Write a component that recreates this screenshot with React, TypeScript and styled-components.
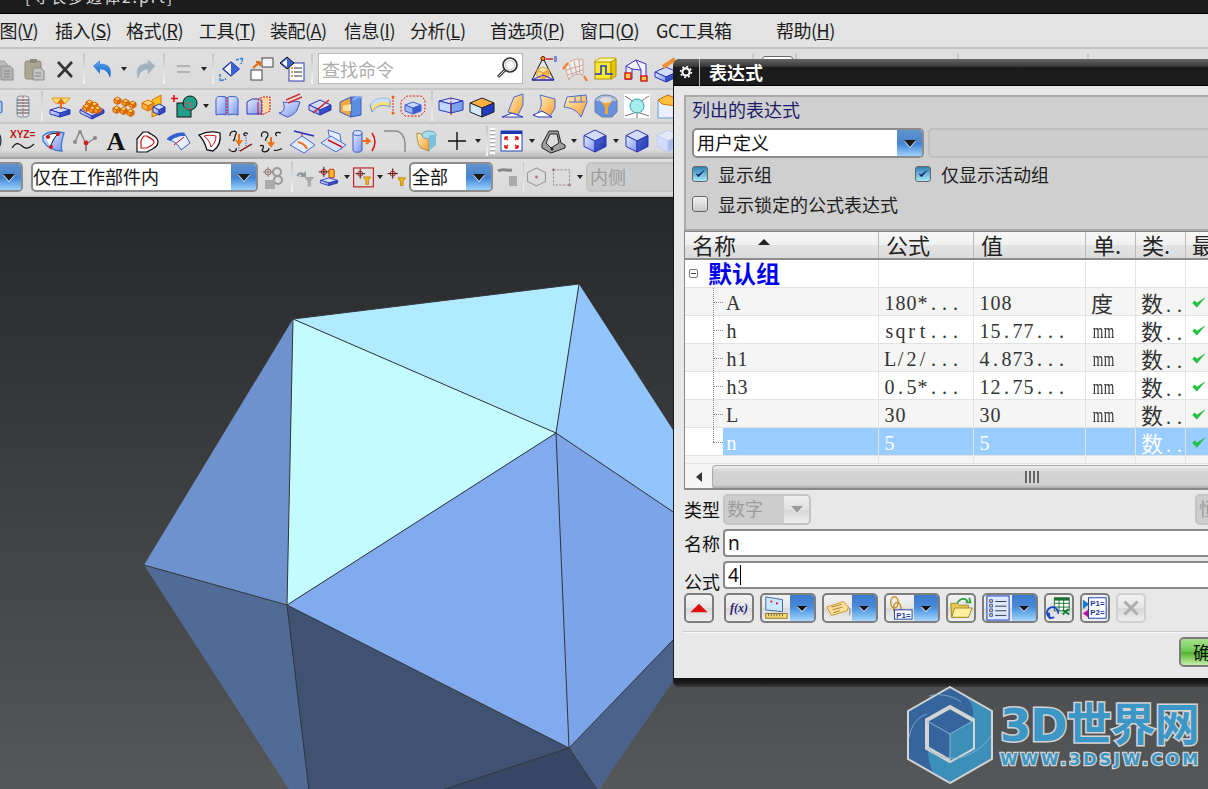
import React from "react";
import styled, { createGlobalStyle } from "styled-components";

const SANS = `"Noto Sans CJK SC", "Liberation Sans", sans-serif`;
const SERIF = `"Liberation Serif", "Noto Sans CJK SC", serif`;

const Global = createGlobalStyle`
  html, body { margin: 0; padding: 0; overflow: hidden; background: #333; }
  * { box-sizing: border-box; }
`;

const Page = styled.div`
  position: relative; width: 1208px; height: 789px; overflow: hidden;
  display: flex; flex-direction: column; font-family: ${SANS}; color: #222;
`;
const TitleStrip = styled.div`
  height: 14px; flex: none; background: #1c1c1c; border-bottom: 1px solid #000; overflow: hidden; padding-left: 25px;
`;
const TitleText = styled.div`
  margin-top: -15px; font: 16px/22px ${SANS}; color: #d8d8d8; word-spacing: 1px; letter-spacing: 1.9px;
`;
const MenuBar = styled.div`
  height: 35px; flex: none; display: flex; align-items: center; margin-left: -18px; padding-bottom: 2px;
  background: #e3e3e3; border-bottom: 2px solid #c0c0c0; white-space: nowrap;
`;
const MenuItem = styled.div<{ $w: number }>`
  flex: none; width: ${p => p.$w}px; font-size: 18px; line-height: 24px; color: #1c1c1c; letter-spacing: -.5px;
  u { text-underline-offset: 1px; }
`;
const ToolRow = styled.div<{ $h: number; $ml: number; $dark?: boolean }>`
  height: ${p => p.$h}px; flex: none; display: flex; align-items: center; padding-left: 0; overflow: hidden;
  & > :first-child { margin-left: ${p => p.$ml}px; }
  background: ${p => p.$dark ? "linear-gradient(#dedede 0, #dcdcdc 78%, #b8b8b8 100%)" : "linear-gradient(#e0e0e0, #dadada)"};
  border-bottom: 2px solid ${p => p.$dark ? "#a8a8a8" : "#c8c8c8"};
`;
const Slot = styled.div<{ $w?: number }>`
  flex: none; width: ${p => p.$w ?? 31}px; height: 30px; display: flex; align-items: center; justify-content: center;
`;
const MiniArrow = styled.div<{ $w?: number }>`
  flex: none; width: ${p => p.$w ?? 11}px; display: flex; justify-content: center;
  &::after { content: ""; border: 3px solid transparent; border-top: 4px solid #222; border-bottom: 0; }
`;
const Sep = styled.div<{ $w?: number }>`
  flex: none; width: ${p => p.$w ?? 7}px; height: 30px; display: flex; justify-content: center;
  &::after { content: ""; width: 2px; background: linear-gradient(#c4c4c4, #f4f4f4); }
`;
const Grip = styled.div`
  flex: none; width: 5px; height: 26px;
  background: repeating-linear-gradient(#fff 0 2px, #aaa 2px 3px, transparent 3px 4px);
`;
const Spacer = styled.div<{ $w: number }>`flex: none; width: ${p => p.$w}px;`;
const MiniPanel = styled.div`
  flex: none; width: 31px; height: 30px; margin-top: 4px; background: #fff; border: 1px solid #666; border-radius: 3px 3px 0 0;
`;
const SearchBox = styled.div`
  flex: none; width: 205px; height: 31px; margin-left: 1px; margin-right: 4px; background: #fff; border: 1px solid #bbb;
  display: flex; align-items: center; justify-content: space-between; padding: 0 0 0 3px;
  font-size: 18px; color: #aeaeae;
`;
const Combo = styled.div<{ $w: number; $h?: number; $off?: boolean }>`
  flex: none; width: ${p => p.$w}px; height: ${p => p.$h ?? 30}px; display: flex; align-items: stretch;
  background: ${p => p.$off ? "#cdcdcd" : "#fff"}; border: 2px solid ${p => p.$off ? "#c4c4c4" : "#8c8c8c"}; border-radius: 5px; overflow: hidden;
  font-size: 18px; color: ${p => p.$off ? "#9c9c9c" : "#111"};
`;
const ComboText = styled.div<{ $pad?: number }>`
  flex: 1; min-width: 0; padding-left: ${p => p.$pad ?? 2}px; line-height: 25px; white-space: nowrap; overflow: hidden;
`;
const ArrowBtn = styled.div<{ $w?: number; $off?: boolean }>`
  flex: none; width: ${p => p.$w ?? 25}px; display: flex; align-items: center; justify-content: center;
  background: ${p => p.$off ? "linear-gradient(#efefef, #e0e0e0 50%, #d6d6d6 52%, #eee)" : "linear-gradient(#5f93cf 0, #4a86cc 45%, #3f84d8 52%, #9ed2fb 100%)"};
  &::after { content: ""; border: 6px solid transparent; border-top: 7px solid ${p => p.$off ? "#999" : "#1a1a1a"}; border-bottom: 0; filter: drop-shadow(0 1px 0 #fff); }
`;

const Viewport = styled.div`
  flex: 1; background: linear-gradient(#262729, #565758); border-top: 1px solid #111;
`;
const Solid = styled.svg`display: block;`;
const Defs = styled.svg`position: absolute; width: 0; height: 0;`;

const Dialog = styled.div`
  position: absolute; left: 673px; top: 59px; width: 600px; height: 628px; display: flex; flex-direction: column;
  border-radius: 7px 0 0 7px; overflow: hidden; background: #1a1a1a;
`;
const DialogTitle = styled.div`
  height: 27px; flex: none; display: flex; align-items: center; gap: 0; color: #fff;
  background: linear-gradient(#666 0, #3a3a3a 28%, #1b1b1b 32%, #1b1b1b 100%); border-bottom: 1px solid #000;
`;
const GearBox = styled.div`
  width: 27px; height: 27px; display: flex; align-items: center; justify-content: center; border-right: 1px solid #bbb;
`;
const DialogName = styled.div`font-size: 18px; font-weight: 700; padding-left: 9px; line-height: 27px;`;
const DialogBody = styled.div`
  flex: none; height: 592px; background: #e8e8e8; padding: 9px 0 0 10px; margin-left: 1px; font-size: 18px; position: relative;
`;
const DialogFoot = styled.div`flex: 1; background: linear-gradient(#111, #1c1c1c 55%, #3a3a3a);`;
const GroupBox = styled.div`
  height: 136px; background: #cfcfcf; border: 2px solid #a9a9a9; border-right: 0; padding: 0 0 0 6px; color: #111;
`;
const GroupTitle = styled.div`font-size: 18px; line-height: 25px; color: #1c1c6a;`;
const ComboLine = styled.div`display: flex; gap: 4px; margin-top: 6px; height: 30px;`;
const BlankField = styled.div`flex: 1; border: 2px solid #bdbdbd; border-right: 0; border-radius: 5px 0 0 5px; background: #cdcdcd;`;
const CheckLine = styled.div`display: grid; grid-template-columns: 223px 1fr; height: 30px; align-items: center;`;
const CheckItem = styled.div`display: flex; align-items: center; gap: 10px; line-height: 24px; color: #1d1d1d; white-space: nowrap; margin-top: 1px;`;
const CheckBox = styled.div<{ $on?: boolean }>`
  width: 16px; height: 16px; border: 1px solid #666; border-radius: 3px; display: flex; align-items: center; justify-content: center;
  background: ${p => p.$on ? "linear-gradient(#2f7fb5, #a5ecf7)" : "linear-gradient(#f2f2f2, #c8c8c8)"};
`;

const Table = styled.div`
  height: 259px; border: 1px solid #888; border-width: 1px 0 2px 1px; background: #f5f5f5; overflow: hidden; display: flex; flex-direction: column; width: 530px;
`;
const Cols = `194px 95px 112px 50px 50px 100px`;
const HeadRow = styled.div`
  display: grid; grid-template-columns: ${Cols}; height: 28px; flex: none; border-bottom: 2px solid #8c8c8c;
  background: linear-gradient(#f7f7f7, #f0f0f0 48%, #e2e2e2 50%, #dcdcdc);
`;
const HeadCell = styled.div<{ $pad: number }>`
  border-right: 1px solid #bbb; padding: 0 0 3px ${p => p.$pad}px; font-size: 22px; line-height: 26px; color: #222; display: flex; align-items: center; white-space: nowrap; overflow: hidden;
`;
const SortMark = styled.div`margin-left: 22px; margin-top: -3px; border: 6px solid transparent; border-bottom: 6px solid #222; border-top: 0;`;
const DataRow = styled.div<{ $alt?: boolean; $h?: number }>`
  display: grid; grid-template-columns: ${Cols}; grid-auto-rows: minmax(0, 1fr); height: ${p => p.$h ?? 28}px; flex: none; border-bottom: 1px solid #e2e2e2;
  background: ${p => p.$alt ? "#f5f5f5" : "#fff"};
`;
const Cell = styled.div<{ $sel?: boolean; $pad?: number; $check?: boolean }>`
  position: relative; border-right: 1px solid #e2e2e2; padding: 2px 0 0 ${p => p.$pad ?? 5}px; font: 20px/27px ${SERIF}; white-space: nowrap; overflow: hidden;
  color: ${p => p.$sel ? "#fff" : "#333"}; background: ${p => p.$sel ? "#99ccff" : "transparent"};
  ${p => p.$check ? "display: flex; align-items: center;" : ""}
`;
const Cjk = styled.span`font: 22px/24px ${SANS}; vertical-align: 0;`;
const HalfChar = styled.span<{ $narrow?: boolean }>`
  display: inline-block; width: 11px; text-align: center;
  ${p => p.$narrow ? "transform: scaleX(.68);" : ""}
`;
const Half: React.FC<{ t: string }> = ({ t }) => (
  <>{t.split("").map((c, i) => <HalfChar key={i} $narrow={c === "m"}>{c}</HalfChar>)}</>
);
const NameCell = styled.div<{ $last?: boolean; $sel?: boolean }>`
  position: relative; display: flex; padding-left: 38px; border-right: 1px solid #e2e2e2; overflow: hidden;
  &::before { content: ""; position: absolute; left: 28px; top: 0; height: ${p => p.$last ? "50%" : "100%"}; border-left: 1px dotted #888; }
  &::after { content: ""; position: absolute; left: 28px; width: 10px; top: 50%; border-top: 1px dotted #888; }
`;
const NameText = styled.div<{ $sel?: boolean }>`
  flex: 1; padding: 2px 0 0 3px; font: 20px/27px ${SERIF}; color: ${p => p.$sel ? "#fff" : "#333"}; background: ${p => p.$sel ? "#99ccff" : "transparent"};
`;
const GroupCell = styled.div`
  display: flex; align-items: center; gap: 10px; padding: 0 0 1px 4px; border-right: 1px solid #e2e2e2; font-size: 24px; font-weight: 700; color: #0000f0; line-height: 22px;
`;
const MinusBox = styled.div`
  width: 9px; height: 9px; border: 1px solid #777; border-radius: 2px; display: flex; align-items: center; justify-content: center;
  &::after { content: ""; width: 5px; height: 1px; background: #444; }
`;
const ScrollBar = styled.div`flex: none; height: 24px; display: flex; align-items: center; margin-top: 1px;`;
const ScrollLeft = styled.div`
  width: 27px; display: flex; justify-content: center;
  &::after { content: ""; border: 5px solid transparent; border-right: 6px solid #333; border-left: 0; }
`;
const ScrollThumb = styled.div`
  flex: 1; height: 24px; border: 1px solid #aaa; border-right: 0; border-radius: 4px 0 0 4px; background: linear-gradient(#eee, #d4d4d4 25%, #d0d0d0 85%, #aaa);
  display: flex; align-items: center; padding-left: 312px;
`;
const ScrollGrip = styled.div`
  width: 14px; height: 12px; background: repeating-linear-gradient(90deg, #666 0 2px, #ddd 2px 4px);
`;
const FormRow = styled.div<{ $h: number; $end?: boolean }>`
  display: flex; height: ${p => p.$h}px; align-items: ${p => p.$end ? "flex-end" : "center"};
`;
const FormLabel = styled.div<{ $low?: number }>`
  flex: none; width: 39px; font-size: 18px; line-height: 24px; color: #111; white-space: nowrap; margin-bottom: ${p => -(p.$low ?? 0)}px;
`;
const TextField = styled.div`
  flex: 1; height: 28px; background: #fff; border: 2px solid #8a8a8a; border-right: 0; border-radius: 4px 0 0 4px; padding-left: 3px;
  font: 19px/24px "Noto Sans", ${SANS}; color: #111; display: flex; align-items: center;
`;
const Caret = styled.div`width: 1px; height: 20px; background: #000; margin-left: 1px;`;
const BtnRow = styled.div`display: flex; margin-top: 4px; height: 30px;`;
const ToolBtn = styled.div<{ $ml: number; $off?: boolean }>`
  flex: none; width: 30px; height: 30px; margin-left: ${p => p.$ml}px; display: flex; align-items: center; justify-content: center;
  border: 2px solid ${p => p.$off ? "#cfcfcf" : "#7e7e7e"}; border-radius: 5px; background: linear-gradient(#f2f2f2, #e6e6e6 48%, #d8d8d8 52%, #efefef);
`;
const SplitBtn = styled.div<{ $ml: number }>`
  flex: none; width: 56px; height: 30px; margin-left: ${p => p.$ml}px; display: flex; overflow: hidden;
  border: 2px solid #7e7e7e; border-radius: 5px; background: linear-gradient(#f2f2f2, #e6e6e6 48%, #d8d8d8 52%, #efefef);
`;
const SplitFace = styled.div`flex: 1; display: flex; align-items: center; justify-content: center;`;
const SplitArrow = styled.div`
  flex: none; width: 24px; display: flex; align-items: center; justify-content: center; background: linear-gradient(#3b78cc 0, #4a8ad8 45%, #4a94e0 52%, #a6d6fc);
  &::after { content: ""; border: 5px solid transparent; border-top: 5px solid #111; border-bottom: 0; filter: drop-shadow(0 1px 0 #fff); }
`;
const Rule = styled.div`margin: 8px 0 0 -1px; height: 2px; background: linear-gradient(#cbcbcb 50%, #f6f6f6 50%);`;
const OkRow = styled.div`display: flex; padding: 4px 0 0 495px;`;
const OkBtn = styled.div`
  width: 60px; height: 30px; border: 2px solid #7b7b7b; border-radius: 5px; padding-left: 12px; font-size: 18px; line-height: 26px; color: #111; background: linear-gradient(#a8e28c, #6fc850 48%, #53b330 52%, #c4f0a8); white-space: nowrap;
`;

const Mark = styled.div`position: absolute; left: 907px; top: 686px; width: 300px; height: 100px; display: flex; gap: 7px;`;
const MarkText = styled.div`display: flex; flex-direction: column; padding-top: 13px; color: #3c97c6;`;
const MarkBig = styled.div`
  font: 700 45px/53px "DejaVu Sans", "Noto Sans CJK SC", sans-serif; letter-spacing: -1px; white-space: nowrap;
  -webkit-text-stroke: 3px #d4d4d4; paint-order: stroke fill;
`;
const MarkSmall = styled.div`
  font: 700 16px/15px "DejaVu Sans", sans-serif; letter-spacing: 2.9px; white-space: nowrap; -webkit-text-stroke: 2.5px #d4d4d4; paint-order: stroke fill;
`;

const Ic: React.FC<{ children: React.ReactNode; s?: number }> = ({ children, s = 28 }) => (
  <svg width={s} height={s} viewBox="0 0 28 28">{children}</svg>
);

const Cube: React.FC<{ x: number; y: number; w: number; h: number; d: number; t?: string; l?: string; r?: string; k?: string }> = ({
  x, y, w, h, d, t = "#d3dcfb", l = "url(#gL)", r = "url(#gR)", k = "#2a36b4",
}) => (
  <g stroke={k} strokeWidth="1" strokeLinejoin="round">
    <path d={`M${x} ${y + d}L${x + w} ${y}L${x + 2 * w} ${y + d}L${x + w} ${y + 2 * d}Z`} fill={t} />
    <path d={`M${x} ${y + d}L${x + w} ${y + 2 * d}V${y + 2 * d + h}L${x} ${y + d + h}Z`} fill={l} />
    <path d={`M${x + 2 * w} ${y + d}L${x + w} ${y + 2 * d}V${y + 2 * d + h}L${x + 2 * w} ${y + d + h}Z`} fill={r} />
  </g>
);
const Orange: React.FC<{ x: number; y: number }> = ({ x, y }) => (
  <Cube x={x} y={y} w={3.5} h={3.5} d={2} t="#ffd060" l="#ffa020" r="#e87000" k="#d06000" />
);
const Cross: React.FC<{ x: number; y: number }> = ({ x, y }) => (
  <g stroke="#c00000" fill="none" strokeWidth="1"><circle cx={x} cy={y} r="3" /><path d={`M${x - 6} ${y}H${x + 6}M${x} ${y - 6}V${y + 6}`} stroke="#300" /></g>
);
const Funnel: React.FC<{ x: number; y: number }> = ({ x, y }) => (
  <path d={`M${x} ${y}h9l-3 4v5h-3v-5z`} fill="#f0b820" stroke="#c08000" />
);

const icons: Record<string, React.ReactNode> = {
  copy: <><path d="M3 6h10l3 3v13H3z" fill="#bcbcbc" stroke="#9a9a9a" /><path d="M10 11h9l3 3v11H10z" fill="#b4b4b4" stroke="#8e8e8e" /><path d="M13 16h6M13 19h6M13 22h6" stroke="#888" /></>,
  clip: <><rect x="4" y="6" width="16" height="18" rx="2" fill="#aaa692" stroke="#8f8b78" /><rect x="9" y="4" width="7" height="4" fill="#8f8b78" /><path d="M12 13h8l3 3v9H12z" fill="#c4c4c4" stroke="#8a8a8a" /><path d="M14 18h6M14 21h6" stroke="#888" /></>,
  del: <path d="M7 7L21 22M21 7L7 22" stroke="#333" strokeWidth="2.6" />,
  undo: <path d="M4 11L11 5V9C19 8 24 13 21 23C19 16 15 14 11 14.5V19Z" fill="url(#gUndo)" />,
  redo: <path d="M24 11L17 5V9C9 8 4 13 7 23C9 16 13 14 17 14.5V19Z" fill="#9fb0c0" stroke="#b4bdc8" />,
  eq: <path d="M8 11H21M8 17H21" stroke="#a4a4a4" strokeWidth="1.6" />,
  orient: <><path d="M14 7L22 14L14 21L6 14Z" fill="#fff" stroke="#1d2fa8" strokeWidth="1.3" /><path d="M14 7L22 14L14 21Z" fill="#3c62d8" /><path d="M19 5L26 3L24 9M3 19L3 26L9 24" fill="none" stroke="#2c7ad8" strokeWidth="1.4" strokeDasharray="3 1" /></>,
  squares: <><rect x="14" y="3" width="11" height="9" fill="#f4f4f4" stroke="#444" /><rect x="3" y="15" width="11" height="10" fill="#fff" stroke="#444" /><path d="M5 13L12 7M12 7H8M12 7V11" stroke="#e86a10" strokeWidth="2" fill="none" /></>,
  dlist: <><rect x="11" y="8" width="15" height="18" fill="#fff" stroke="#2a3ab0" /><path d="M16 13H24M16 17H24M16 21H24" stroke="#333" /><rect x="13" y="12" width="2" height="2" fill="#e0a030" /><rect x="13" y="16" width="2" height="2" fill="#e0a030" /><rect x="13" y="20" width="2" height="2" fill="#e0a030" /><path d="M9 2L16 8L9 14L2 8Z" fill="#3c62d8" stroke="#111" /><path d="M9 4L9 12L4 8Z" fill="#fff" /></>,
  lens: <><circle cx="16" cy="10" r="7" fill="#fff" stroke="#333" strokeWidth="1.7" /><circle cx="16" cy="10" r="4.5" fill="none" stroke="#bbb" /><path d="M11 15L4 22" stroke="#333" strokeWidth="3" /><path d="M10.6 15.5L4.5 21.5" stroke="#fff" strokeWidth="1" /></>,
  pyramid: <><path d="M14 3L3 25H25Z" fill="#fff" fillOpacity=".2" stroke="#111" /><Cube x={8} y={12} w={6} h={6} d={3} t="#ffe8b0" l="#ffd27a" r="#f4b040" k="#e8a030" /><path d="M3 25L14 20L25 25Z" fill="none" stroke="#2a2ad0" /><circle cx="14" cy="3.5" r="2" fill="#f2a000" stroke="#600" /><path d="M17 4H24" stroke="#d01010" strokeWidth="1.4" /><path d="M25 2H28M25 4H28M25 6H28" stroke="#2030d0" /></>,
  mesh: <><path d="M5 12C11 4 17 3 23 5V20C17 18 11 19 9 25Z" fill="#eee" stroke="#d8a090" /><path d="M9 9L13 22M14 6L17 20M19 5L20 19M6 15L23 10M7 20L23 15" stroke="#c8a8a0" fill="none" /><path d="M3 14L8 8M24 21L27 26" stroke="#f08030" strokeWidth="2.4" /></>,
  ybox: <><path d="M4 6L9 3H25L24 8H4Z" fill="#fff8a0" stroke="#c8a800" /><rect x="4" y="7" width="16" height="17" fill="#ffe830" stroke="#b09000" /><path d="M20 7L25 4V21L20 24Z" fill="#e8c800" stroke="#b09000" /><path d="M4 19H10V11H15V19H22" fill="none" stroke="#1838c8" strokeWidth="1.5" /></>,
  arch: <><path d="M4 11L14 5L24 9V24L19 25V15L10 14V24H4Z" fill="#f4f4ff" stroke="#3c2ad0" /><path d="M4 11L10 14M14 5L19 15" stroke="#3c2ad0" /><rect x="3" y="18" width="6" height="6" fill="#ffd040" stroke="#d01010" strokeWidth="1.4" /><rect x="19" y="21" width="6" height="5" fill="#ffd040" stroke="#d01010" strokeWidth="1.4" /></>,
  slab: <><Cube x={2} y={12} w={11} h={5} d={5} /><path d="M10 12L22 4" stroke="#f09030" strokeWidth="4" /></>,
  hex: <path d="M14 5L24 10V20L14 25L4 20V10Z" fill="#a8c4f0" stroke="#3060c0" />,
  spring: <><rect x="8" y="4" width="12" height="21" rx="3" fill="#dfe4e8" stroke="#8090a0" /><path d="M8 8H20M8 11H20M8 14H20M8 18H20M8 21H20" stroke="#555" /><path d="M14 4V25" stroke="#d05050" strokeDasharray="2 1" /></>,
  extrude: <><Cube x={3} y={15} w={10} h={4} d={3} /><path d="M5 6H23L19 11H8Z" fill="#ffe070" stroke="#e09020" /><path d="M14 17V10M11 12L14 8L17 12" fill="none" stroke="#e86a10" strokeWidth="2" /></>,
  pads: <><Cube x={2} y={12} w={12} h={3} d={6} /><Orange x={8} y={8} /><Orange x={13} y={10} /><Orange x={5} y={12} /><Orange x={11} y={14} /><Orange x={16} y={14} /></>,
  ocubes: <><Orange x={5} y={5} /><Orange x={13} y={7} /><Orange x={20} y={9} /><Orange x={4} y={14} /><Orange x={11} y={15} /><Orange x={18} y={17} /></>,
  planes: <><path d="M12 8L21 3V21L12 25Z" fill="#ffc020" stroke="#e07000" /><Cube x={2} y={8} w={6} h={5} d={3} t="#ffd080" l="#ffb040" r="#f09010" k="#e07000" /><Cube x={13} y={12} w={6} h={5} d={3} /></>,
  teal: <><rect x="6" y="11" width="14" height="14" fill="#23a08c" stroke="#111" /><circle cx="19" cy="11" r="7" fill="#23a08c" stroke="#111" /><rect x="14" y="11" width="6" height="6" fill="none" stroke="#c06060" /><path d="M3 3V10M0 6.5H7" stroke="#e01010" strokeWidth="1.6" /></>,
  book: <><path d="M3 23V8C3 4 7 4 13 5V23C9 22 6 22 3 23Z" fill="url(#gL)" stroke="#3a5ac8" /><path d="M25 23V8C25 4 21 4 15 5V23C19 22 22 22 25 23Z" fill="url(#gL)" stroke="#3a5ac8" /><path d="M14 5V23" stroke="#d01010" strokeDasharray="2 1" /></>,
  dotbox: <><path d="M3 10L8 7H18V22H3Z" fill="url(#gL)" stroke="#2a36c4" /><path d="M14 8L18 5H26V19L18 23V8Z" fill="#ffd8a0" stroke="#d01010" strokeDasharray="2 1" /><path d="M14 10V23" stroke="#d01010" /></>,
  surfcut: <><path d="M8 10C14 12 19 8 25 10L22 18C20 22 14 25 12 25L4 21C10 20 10 14 8 10Z" fill="url(#gL)" stroke="#3a5ac8" /><path d="M11 8L25 2M13 11L27 5" stroke="#d03030" strokeWidth="1.4" /></>,
  slabcut: <><Cube x={3} y={8} w={11} h={5} d={5} /><path d="M7 21L23 8" stroke="#d02020" strokeWidth="1.6" /></>,
  frame: <><path d="M3 10L14 5V25L3 20Z" fill="#f0a840" stroke="#3a5ac8" /><path d="M14 5L24 5V23L14 25Z" fill="#5c8ce0" stroke="#3a5ac8" /><path d="M6 14L14 12V19L6 19Z" fill="#ffe0a0" /><path d="M16 8C20 4 24 4 25 6" stroke="#8ab4f0" strokeWidth="2" fill="none" /></>,
  band: <><path d="M2 13C8 5 16 5 22 8V15C16 12 8 13 4 20Z" fill="#ffe070" stroke="#7098d0" /><path d="M2 13C8 5 16 5 22 8L20 11C14 9 9 10 4 15Z" fill="#c8e0ff" /><path d="M25 5V21" stroke="#e02020" strokeDasharray="2 1" /><circle cx="25" cy="5" r="1.5" fill="#f06000" /><circle cx="25" cy="21" r="1.5" fill="#f06000" /></>,
  redbox: <><Cube x={6} y={10} w={8} h={6} d={3} t="#c8d8ff" l="#9cb4f4" r="#3e5cd0" k="#4060d0" /><path d="M2 9L8 4H22L26 8V19L21 24H6L2 20Z" fill="none" stroke="#e01010" strokeDasharray="2 1.5" /></>,
  cutbox: <><Cube x={2} y={6} w={12} h={9} d={3} t="#d3e4fb" l="#c0d8ff" r="#7ba4ef" /><path d="M14 6V24" stroke="#d01010" strokeDasharray="2 1" /></>,
  ycube: <><Cube x={2} y={6} w={12} h={9} d={5} t="#ffb040" l="#d3e8ff" r="#1e3cc0" k="#222" /></>,
  sheet1: <><path d="M15 5L24 2V13L19 23L9 20Z" fill="url(#gO)" stroke="#4a6ad0" /><path d="M3 25L13 21L24 25Z" fill="#fff" stroke="#2a36b4" /></>,
  sheet2: <><path d="M10 3L25 7V16L20 24L8 20C12 16 12 10 10 3Z" fill="url(#gO)" stroke="#4a6ad0" /><path d="M3 23L12 19L22 25H8Z" fill="#fff" stroke="#2a36b4" /></>,
  sheet3: <><path d="M6 5L25 3L26 10L20 25C16 18 10 16 3 15Z" fill="url(#gO)" stroke="#4a6ad0" /><path d="M8 10H24M14 5V10M20 4V10" stroke="#4a6ad0" /></>,
  cup: <><ellipse cx="14" cy="9" rx="11" ry="6" fill="#aac0de" stroke="#6a80a0" /><path d="M3 9V20L10 25H20L25 20V9" fill="#6a90e0" stroke="#6a80a0" /><path d="M8 8H21L16 15V22H13V15Z" fill="#f8a828" /><ellipse cx="14" cy="8" rx="6" ry="3" fill="#ddd" /></>,
  corner: <><rect x="1" y="2" width="26" height="24" fill="#fff" /><path d="M2 4L14 12L26 4M14 20V26M2 24L14 20L26 24" stroke="#777" fill="none" /><circle cx="14" cy="14" r="7" fill="#a8ecec" stroke="#30a0b0" /></>,
  ysheet: <><path d="M4 8L14 3L26 8V26H4Z" fill="#e8f0ff" stroke="#7098d0" /><path d="M4 8L14 3L26 9L22 14L8 12Z" fill="#ffc040" stroke="#e07000" /></>,
  ball: <path d="M6 8C10 2 18 3 20 5C24 9 24 18 20 22C16 25 10 22 6 16Z" fill="#5070c0" stroke="#223" />,
  xyz: <><text x="1" y="11" fontFamily="Liberation Sans" fontWeight="700" fontSize="10" fill="#b81818">XYZ=</text><path d="M3 21C7 15 10 16 13 19C17 23 21 21 25 17" fill="none" stroke="#111" strokeWidth="1.1" /></>,
  patch: <><path d="M3 9C8 4 16 4 24 6C22 12 20 18 22 24C14 24 8 22 3 14Z" fill="url(#gL)" stroke="#3a7ac8" strokeWidth="1.4" /><path d="M6 10C10 6 15 6 18 7C14 10 12 16 10 20" fill="#fff" stroke="#111" /><circle cx="8" cy="10" r="2" fill="#e01010" /><circle cx="18" cy="7" r="2" fill="#e01010" /><circle cx="11" cy="20" r="2" fill="#e01010" /></>,
  nodes: <><path d="M9 4L4 15M9 4L15 17L24 11" stroke="#888" strokeWidth="1.5" fill="none" /><circle cx="9" cy="5" r="2" fill="#888" /><circle cx="4" cy="15" r="2" fill="#888" /><circle cx="24" cy="11" r="2" fill="#888" /><circle cx="15" cy="16" r="2.4" fill="#d02020" /><path d="M15 18V24" stroke="#888" strokeWidth="2" /></>,
  bigA: <text x="14" y="23" textAnchor="middle" fontFamily="Liberation Serif" fontWeight="700" fontSize="26" fill="#111">A</text>,
  heart: <><path d="M4 12L10 5H15C18 8 25 9 25 15C25 21 18 22 14 25H4Z" fill="#fff" stroke="#111" strokeWidth="1.2" /><path d="M8 13L11 9H14C16 11 21 12 21 15C21 18 17 19 14 21H8Z" fill="none" stroke="#d01010" strokeWidth="1.2" /></>,
  surf: <><path d="M3 12C10 6 16 6 20 6L26 16L17 23C14 17 10 14 3 12Z" fill="#e8f0ff" stroke="#3a5ac8" /><path d="M3 12C10 6 16 6 20 6L21 9C14 9 10 11 6 14Z" fill="#3060d0" /><path d="M10 18L20 10" stroke="#d01010" /></>,
  shield: <><path d="M4 8C10 5 18 4 25 6C26 13 24 20 18 24L12 23C10 16 8 12 4 8Z" fill="#fff" stroke="#111" strokeWidth="1.3" /><path d="M9 9C13 8 17 8 21 9C21 14 19 17 16 20C15 15 13 12 9 9Z" fill="none" stroke="#d01010" /></>,
  curves1: <><path d="M4 9C3 3 12 3 10 7C8 9 10 12 7 14M22 7C18 4 16 8 20 9M3 22C5 26 12 25 10 21M14 24L26 17" fill="none" stroke="#111" strokeWidth="1.2" /><path d="M14 24L26 17" stroke="#d01010" /><path d="M13 8V24M20 8V20" stroke="#2030c0" strokeDasharray="1 1.5" /><path d="M13 7V15M10 13L13 17L16 13" stroke="#f07010" strokeWidth="2" fill="none" /></>,
  curves2: <><path d="M5 10C2 4 11 3 11 8C11 11 7 11 9 14M24 6C19 4 17 7 20 9M3 19C6 17 8 20 5 23C6 26 12 25 12 21M17 23C20 25 24 21 25 22" fill="none" stroke="#111" strokeWidth="1.2" /><path d="M14 10V18M11 15L14 19L17 15" stroke="#f07010" strokeWidth="2" fill="none" /></>,
  tsurf: <><path d="M6 4L26 9" stroke="#2030c0" strokeWidth="1.5" /><path d="M14 6V15" stroke="#d01010" /><path d="M2 18L14 9L27 18L16 26Z" fill="#e0ecff" stroke="#4a6ad0" /><path d="M10 15C14 16 18 19 19 22" stroke="#f07010" strokeWidth="2" fill="none" /></>,
  tsurf2: <><path d="M9 3L21 7L23 22L12 18Z" fill="#e8f0ff" stroke="#4a6ad0" /><path d="M2 16L12 9L27 18L17 25Z" fill="#d8e4ff" stroke="#4a6ad0" /><path d="M9 13L23 20" stroke="#d01010" strokeWidth="1.4" /></>,
  cyl: <><path d="M3 7C3 4 12 4 12 7V23C12 26 3 26 3 23Z" fill="url(#gL)" stroke="#3a5ac8" /><ellipse cx="7.5" cy="6" rx="4.5" ry="2.4" fill="#d8e4ff" stroke="#3a5ac8" /><path d="M12 14H19M16 11L20 14L16 17" stroke="#f07010" strokeWidth="1.8" fill="none" /><path d="M22 6C26 12 26 18 22 24" stroke="#e01010" strokeWidth="1.5" fill="none" /></>,
  fillet: <path d="M3 4H14C20 4 24 10 24 16V25" fill="none" stroke="#8a8a8a" strokeWidth="1.4" />,
  ycyl: <><path d="M5 6L17 9V24L9 21C6 18 5 12 5 6Z" fill="url(#gO)" stroke="#a09040" /><ellipse cx="17" cy="8" rx="7" ry="4" fill="#a8e0f0" stroke="#7098b0" /><path d="M17 8H24V18L17 24Z" fill="#7cc0e0" /></>,
  plus: <path d="M14 5V23M5 14H23" stroke="#111" strokeWidth="1.4" />,
  fit: <><rect x="4" y="4" width="21" height="20" fill="#fff" stroke="#2040b0" strokeWidth="1" /><rect x="4" y="4" width="21" height="3" fill="#1838b0" /><path d="M8 10L11 13M21 10L18 13M8 21L11 18M21 21L18 18M8 10H11M8 10V13M21 10H18M21 10V13M8 21H11M8 21V18M21 21H18M21 21V18" stroke="#e01010" strokeWidth="1.5" fill="none" /></>,
  lap: <><path d="M3 17L10 4H19L22 16L26 18V21L12 26L3 21Z" fill="#a0a0a0" stroke="#222" /><path d="M7 16L11 7H18L20 16L12 21Z" fill="#ddd" stroke="#222" /><circle cx="13" cy="22" r="1.5" fill="#222" /></>,
  bcube: <Cube x={3} y={3} w={11} h={11} d={5.5} />,
  pcube: <Cube x={3} y={3} w={11} h={11} d={5.5} t="#e4e8fb" l="#d4dcfb" r="#a8b8f0" k="#c0ccf0" />,
  gchain: <><circle cx="17" cy="9" r="4" fill="none" stroke="#999" strokeWidth="2" /><circle cx="18" cy="17" r="4" fill="none" stroke="#999" strokeWidth="2" /><path d="M5 17H15V26H5Z" fill="#aaa" /><circle cx="8" cy="9" r="3" fill="none" stroke="#a06060" /><path d="M3 9H13M8 4V14" stroke="#888" /></>,
  garrow: <><path d="M4 12C6 7 12 8 12 10L15 7V14H8L10 12C9 11 7 11 6 14Z" fill="#8a9aa0" /><path d="M13 14H25L21 19V25H17V19Z" fill="#aaa" /></>,
  xbox: <><Cross x={8} y={8} /><rect x="14" y="5" width="6" height="10" rx="1" fill="#ffc020" stroke="#d01010" /><Cube x={4} y={15} w={10} h={3} d={3} /></>,
  xfun: <><rect x="2" y="3" width="24" height="23" fill="none" stroke="#c01010" strokeWidth="1.3" /><Cross x={10} y={10} /><Funnel x={14} y={14} /></>,
  xfun2: <><Cross x={9} y={10} /><Funnel x={15} y={15} /></>,
  ghain: <><path d="M4 8C8 5 14 8 18 7" stroke="#888" strokeWidth="3" fill="none" /><rect x="15" y="13" width="8" height="10" fill="#aaa" /></>,
  ghex: <><path d="M14 4L24 9V19L14 24L4 19V9Z" fill="none" stroke="#999" strokeWidth="1.2" /><circle cx="14" cy="14" r="1.6" fill="#b07070" /></>,
  grect: <><rect x="5" y="6" width="18" height="17" fill="none" stroke="#888" strokeDasharray="2.5 1.5" /><circle cx="5" cy="6" r="1.5" fill="#a77" /><circle cx="23" cy="23" r="1.5" fill="#a77" /></>,
  red: <path d="M4 19L14 9L24 19Z" fill="#e01010" />,
  fx: <text x="14" y="19" textAnchor="middle" fontFamily="Liberation Serif" fontStyle="italic" fontWeight="700" fontSize="14" fill="#2a1a78">f(x)</text>,
  ruler: <><path d="M3 2L21 5V18L3 16Z" fill="#c8e8ff" stroke="#4060a0" /><rect x="8" y="6" width="2" height="2" fill="#e01010" /><rect x="14" y="8" width="2" height="2" fill="#e01010" /><rect x="3" y="20" width="23" height="5" fill="#ffe070" stroke="#8a7020" /><path d="M6 20V23M9 20V23M12 20V23M15 20V23M18 20V23M21 20V23" stroke="#555" /></>,
  tag: <><path d="M2 13L20 7L25 13L24 17L7 22Z" fill="#ffe098" stroke="#c89030" /><path d="M7 13L18 10M8 16L19 13M9 19L16 17" stroke="#a08030" /><path d="M25 13C28 15 27 19 26 22" stroke="#777" fill="none" /></>,
  chain: <><ellipse cx="8" cy="8" rx="4" ry="6" fill="none" stroke="#c89020" strokeWidth="1.6" /><ellipse cx="11" cy="14" rx="4" ry="6" fill="none" stroke="#c89020" strokeWidth="1.6" /><rect x="8" y="16" width="19" height="10" fill="#fff" stroke="#1838a0" /><text x="10" y="24.5" fontFamily="Liberation Sans" fontWeight="700" fontSize="8.5" fill="#1838a0">P1=</text></>,
  folder: <><path d="M4 24L3 9H10L12 11H22V24Z" fill="#e8c850" stroke="#a08820" /><path d="M4 24L7 14H26L22 24Z" fill="#fff0a0" stroke="#a08820" /><path d="M10 9C13 3 19 3 21 7M19 8L24 8L23 3" stroke="#30a040" strokeWidth="2" fill="none" /></>,
  blist: <><rect x="2" y="1" width="24" height="26" fill="#dce8ff" stroke="#3858c0" strokeWidth="1.3" /><path d="M11 7H23M11 12H23M11 17H23M11 22H23" stroke="#333" /><path d="M5 5h3v3H5zM5 10h3v3H5zM5 15h3v3H5zM5 20h3v3H5z" fill="#f0c860" stroke="#3858c0" /></>,
  table: <><rect x="9" y="3" width="16" height="14" fill="#fff" stroke="#1a7030" /><rect x="9" y="3" width="16" height="3" fill="#1a7030" /><path d="M9 9H25M9 13H25M14 3V17M19 3V17" stroke="#1a7030" /><path d="M18 16L25 21M24 15L18 21" stroke="#108030" strokeWidth="2" /><path d="M13 20A6 6 0 1 0 6 25M3 19L4 25L9 24" fill="none" stroke="#1848c8" strokeWidth="2" /></>,
  pp: <><path d="M1 5L8 10L1 15Z" fill="#1878c8" /><path d="M8 15L1 20L8 25Z" fill="#b010a0" /><rect x="7" y="3" width="19" height="22" fill="#fff" stroke="#1838a0" /><text x="9" y="12" fontFamily="Liberation Sans" fontWeight="700" fontSize="8.5" fill="#1838a0">P1=</text><text x="9" y="22" fontFamily="Liberation Sans" fontWeight="700" fontSize="8.5" fill="#1838a0">P2=</text></>,
  grayX: <path d="M7 7L21 21M21 7L7 21" stroke="#adadad" strokeWidth="3.4" />,
  gear: <><circle cx="14" cy="14" r="5" fill="none" stroke="#fff" strokeWidth="3" /><circle cx="14" cy="14" r="7.5" fill="none" stroke="#fff" strokeWidth="2.4" strokeDasharray="2.6 3.2" /></>,
  check: <path d="M6 14L11 20L22 7L11 15Z" fill="#14207a" stroke="#14207a" strokeWidth="1" />,
  green: <path d="M5 14L11 20L22 7L11 14L8 11Z" fill="#1ec83c" stroke="#10a828" strokeWidth=".6" />,
};

/* a name is an icon in a 31px slot; "a" a drop arrow; "|" a separator; "g" a grip; [name,w] a sized slot */
const Tools: React.FC<{ items: (string | [string, number])[] }> = ({ items }) => (
  <>
    {items.map((it, i) => {
      const n = Array.isArray(it) ? it[0] : it;
      const w = Array.isArray(it) ? it[1] : undefined;
      if (n === "a") return <MiniArrow key={i} $w={w} />;
      if (n === "|") return <Sep key={i} $w={w} />;
      if (n === "g") return <Grip key={i} />;
      if (n === "_") return <Spacer key={i} $w={w ?? 0} />;
      return <Slot key={i} $w={w}><Ic>{icons[n]}</Ic></Slot>;
    })}
  </>
);

const menus: [string, string, number][] = [
  ["视图", "V", 73], ["插入", "S", 71], ["格式", "R", 73], ["工具", "T", 71], ["装配", "A", 74],
  ["信息", "I", 66], ["分析", "L", 80], ["首选项", "P", 90], ["窗口", "O", 76], ["GC工具箱", "", 120], ["帮助", "H", 100],
];

const rows = [
  { n: "A", f: "180*...", v: "108", u: "度", alt: true },
  { n: "h", f: "sqrt...", v: "15.77...", u: "mm", alt: false },
  { n: "h1", f: "L/2/...", v: "4.873...", u: "mm", alt: true },
  { n: "h3", f: "0.5*...", v: "12.75...", u: "mm", alt: false },
  { n: "L", f: "30", v: "30", u: "mm", alt: true },
  { n: "n", f: "5", v: "5", u: "", alt: false, sel: true },
];

const faces: [string, string][] = [
  ["#506c96", "144,563 287,603 309,789 290,789"],
  ["#3f5272", "287,603 569,746 439,789 309,789"],
  ["#374664", "569,746 598,789 439,789"],
  ["#4b638c", "569,746 700,610 700,640 598,789"],
  ["#6e92cd", "293,317 287,603 144,563"],
  ["#c3fcff", "293,317 556,431 287,603"],
  ["#b0ebff", "293,317 579,282 556,431"],
  ["#93c5fd", "579,282 700,470 700,528 556,431"],
  ["#82abef", "556,431 569,746 287,603"],
  ["#7ba5e8", "556,431 700,528 700,610 569,746"],
];
const edges = [
  "293,317 579,282", "293,317 556,431", "579,282 556,431", "293,317 287,603", "556,431 287,603", "144,563 287,603",
  "556,431 569,746", "287,603 569,746", "287,603 309,789", "569,746 439,789", "569,746 598,789", "556,431 700,528", "569,746 700,610",
];

export default function App() {
  return (
    <Page>
      <Global />
      <Defs>
        <defs>
          <linearGradient id="gL" x1="0" y1="0" x2="1" y2="1"><stop offset="0" stopColor="#e6ecff" /><stop offset="1" stopColor="#7c94ee" /></linearGradient>
          <linearGradient id="gR" x1="0" y1="0" x2="1" y2="1"><stop offset="0" stopColor="#4e68d8" /><stop offset="1" stopColor="#1e34a8" /></linearGradient>
          <linearGradient id="gO" x1="0" y1="0" x2="1" y2="1"><stop offset="0" stopColor="#fff4c0" /><stop offset="1" stopColor="#f89a30" /></linearGradient>
          <linearGradient id="gUndo" x1="0" y1="0" x2="0" y2="1"><stop offset="0" stopColor="#5aa0f0" /><stop offset="1" stopColor="#1464c8" /></linearGradient>
        </defs>
      </Defs>

      <TitleStrip><TitleText>[寻长多边体2.prt]</TitleText></TitleStrip>

      <MenuBar>
        {menus.map(([t, k, w]) => (
          <MenuItem key={t} $w={w}>{t}{k ? <>(<u>{k}</u>)</> : null}</MenuItem>
        ))}
      </MenuBar>

      <ToolRow $h={41} $ml={-10}>
        <Tools items={[["copy", 30], ["clip", 30], ["del", 30], ["|", 8], ["undo", 30], ["a", 12], ["redo", 30], ["|", 8], ["eq", 29], ["a", 13], ["|", 6], ["orient", 30], ["squares", 31], ["dlist", 30], ["|", 10]]} />
        <SearchBox>查找命令<Ic>{icons.lens}</Ic></SearchBox>
        <Tools items={["pyramid", "mesh", "ybox", "arch", "slab", ["_", 70], ["|", 2], ["_", 8]]} />
        <MiniPanel />
        <Tools items={[["|", 6], ["_", 158], ["|", 2], ["_", 128], ["|", 2]]} />
      </ToolRow>

      <ToolRow $h={34} $ml={-24}>
        <Tools items={["hex", "spring", "|", "extrude", "pads", "ocubes", "planes", "teal", "a", "book", "dotbox", "surfcut", "slabcut", "frame", "band", "redbox", "|", "cutbox", "ycube", "sheet1", "sheet2", "sheet3", "cup", "corner", "ysheet"]} />
      </ToolRow>

      <ToolRow $h={35} $ml={-24} $dark>
        <Tools items={["ball", "xyz", "patch", "nodes", "bigA", "heart", "surf", "shield", "curves1", "curves2", "tsurf", "tsurf2", "cyl", "fillet", "ycyl", "plus", "a", "|", "g", "fit", "a", "lap", "a", "bcube", "a", "bcube", "pcube"]} />
      </ToolRow>

      <ToolRow $h={38} $ml={-20}>
        <Combo $w={43}><ComboText /><ArrowBtn /></Combo>
        <Spacer $w={8} />
        <Combo $w={227}><ComboText $pad={0}>仅在工作部件内</ComboText><ArrowBtn /></Combo>
        <Tools items={[["gchain", 32], ["|", 3], ["garrow", 24], ["xbox", 24], ["a", 11], ["xfun", 23], ["a", 10], ["xfun2", 24]]} />
        <Combo $w={84}><ComboText $pad={1}>全部</ComboText><ArrowBtn /></Combo>
        <Tools items={[["ghain", 30], ["|", 1], ["ghex", 25], ["grect", 25], ["a", 12]]} />
        <Combo $w={100} $off><ComboText>内侧</ComboText></Combo>
      </ToolRow>

      <Viewport>
        <Solid width="1208" height="593" viewBox="0 196 1208 593">
          {faces.map(([c, p]) => <polygon key={p} points={p} fill={c} />)}
          {edges.map(p => <polyline key={p} points={p} fill="none" stroke="#34363a" strokeWidth="1" />)}
        </Solid>
      </Viewport>

      <Dialog>
        <DialogTitle>
          <GearBox><Ic s={20}>{icons.gear}</Ic></GearBox>
          <DialogName>表达式</DialogName>
        </DialogTitle>
        <DialogBody>
          <GroupBox>
            <GroupTitle>列出的表达式</GroupTitle>
            <ComboLine>
              <Combo $w={232} $h={30}><ComboText $pad={3}>用户定义</ComboText><ArrowBtn /></Combo>
              <BlankField />
            </ComboLine>
            <CheckLine>
              <CheckItem><CheckBox $on><Ic s={14}>{icons.check}</Ic></CheckBox>显示组</CheckItem>
              <CheckItem><CheckBox $on><Ic s={14}>{icons.check}</Ic></CheckBox>仅显示活动组</CheckItem>
            </CheckLine>
            <CheckLine>
              <CheckItem><CheckBox />显示锁定的公式表达式</CheckItem>
            </CheckLine>
          </GroupBox>

          <Table>
            <HeadRow>
              <HeadCell $pad={7}>名称<SortMark /></HeadCell>
              <HeadCell $pad={7}>公式</HeadCell>
              <HeadCell $pad={7}>值</HeadCell>
              <HeadCell $pad={7}>单.</HeadCell>
              <HeadCell $pad={6}>类.</HeadCell>
              <HeadCell $pad={6}>最</HeadCell>
            </HeadRow>
            <DataRow>
              <GroupCell><MinusBox />默认组</GroupCell>
              <Cell /><Cell /><Cell /><Cell /><Cell />
            </DataRow>
            {rows.map((r, i) => (
              <DataRow key={r.n} $alt={r.alt}>
                <NameCell $last={i === rows.length - 1}><NameText $sel={r.sel}><Half t={r.n} /></NameText></NameCell>
                <Cell $sel={r.sel}><Half t={r.f} /></Cell>
                <Cell $sel={r.sel}><Half t={r.v} /></Cell>
                <Cell $sel={r.sel}>{r.u === "度" ? <Cjk>度</Cjk> : <Half t={r.u} />}</Cell>
                <Cell $sel={r.sel}><Cjk>数</Cjk><Half t=".." /></Cell>
                <Cell $sel={r.sel} $pad={3} $check><Ic s={20}>{icons.green}</Ic></Cell>
              </DataRow>
            ))}
            <DataRow $alt $h={8}><Cell /><Cell /><Cell /><Cell /><Cell /><Cell /></DataRow>
            <ScrollBar>
              <ScrollLeft />
              <ScrollThumb><ScrollGrip /></ScrollThumb>
            </ScrollBar>
          </Table>

          <FormRow $h={38}>
            <FormLabel>类型</FormLabel>
            <Combo $w={88} $h={31} $off><ComboText>数字</ComboText><ArrowBtn $off /></Combo>
            <Spacer $w={384} />
            <Combo $w={60} $h={31} $off><ComboText>恒定</ComboText></Combo>
          </FormRow>
          <FormRow $h={30}>
            <FormLabel>名称</FormLabel>
            <TextField>n</TextField>
          </FormRow>
          <FormRow $h={31} $end>
            <FormLabel $low={4}>公式</FormLabel>
            <TextField>4<Caret /></TextField>
          </FormRow>
          <BtnRow>
            <ToolBtn $ml={0}><Ic s={24}>{icons.red}</Ic></ToolBtn>
            <ToolBtn $ml={10}><Ic s={24}>{icons.fx}</Ic></ToolBtn>
            <SplitBtn $ml={6}><SplitFace><Ic s={26}>{icons.ruler}</Ic></SplitFace><SplitArrow /></SplitBtn>
            <SplitBtn $ml={6}><SplitFace><Ic s={26}>{icons.tag}</Ic></SplitFace><SplitArrow /></SplitBtn>
            <SplitBtn $ml={6}><SplitFace><Ic s={26}>{icons.chain}</Ic></SplitFace><SplitArrow /></SplitBtn>
            <ToolBtn $ml={6}><Ic s={26}>{icons.folder}</Ic></ToolBtn>
            <SplitBtn $ml={6}><SplitFace><Ic s={26}>{icons.blist}</Ic></SplitFace><SplitArrow /></SplitBtn>
            <ToolBtn $ml={6}><Ic s={26}>{icons.table}</Ic></ToolBtn>
            <ToolBtn $ml={6}><Ic s={26}>{icons.pp}</Ic></ToolBtn>
            <ToolBtn $ml={6} $off><Ic s={26}>{icons.grayX}</Ic></ToolBtn>
          </BtnRow>
          <Rule />
          <OkRow><OkBtn>确定</OkBtn></OkRow>
        </DialogBody>
        <DialogFoot />
      </Dialog>

      <Mark>
        <svg width="86" height="98" viewBox="0 0 86 98">
          <path d="M43 1L85 25V73L43 97L1 73V25Z" fill="#35659c" />
          <path d="M55 8C66 15 68 26 65 36L66 62L43 75L21 62C21 75 24 85 28 88L43 97L85 73V25Z" fill="#3c8fb9" />
          <path d="M43 1L85 25V73L43 97L1 73V25Z" fill="none" stroke="#d4d4d4" strokeWidth="2" />
          <path d="M20 34L43 21L66 34V62L43 75L20 62Z" fill="#35659c" stroke="#d4d4d4" strokeWidth="4" />
          <path d="M43 48L66 35V62L43 75Z" fill="#3c8fb9" />
          <path d="M20 35L43 48V75M43 48L66 35" fill="none" stroke="#8fb4d0" strokeWidth="1" />
          <path d="M21 62C36 78 66 76 84 50M2 52C4 38 12 30 20 28M22 10C34 6 50 12 54 16" fill="none" stroke="#8fb4d0" strokeWidth=".8" />
        </svg>
        <MarkText>
          <MarkBig>3D世界网</MarkBig>
          <MarkSmall>WWW.3DSJW.COM</MarkSmall>
        </MarkText>
      </Mark>
    </Page>
  );
}
